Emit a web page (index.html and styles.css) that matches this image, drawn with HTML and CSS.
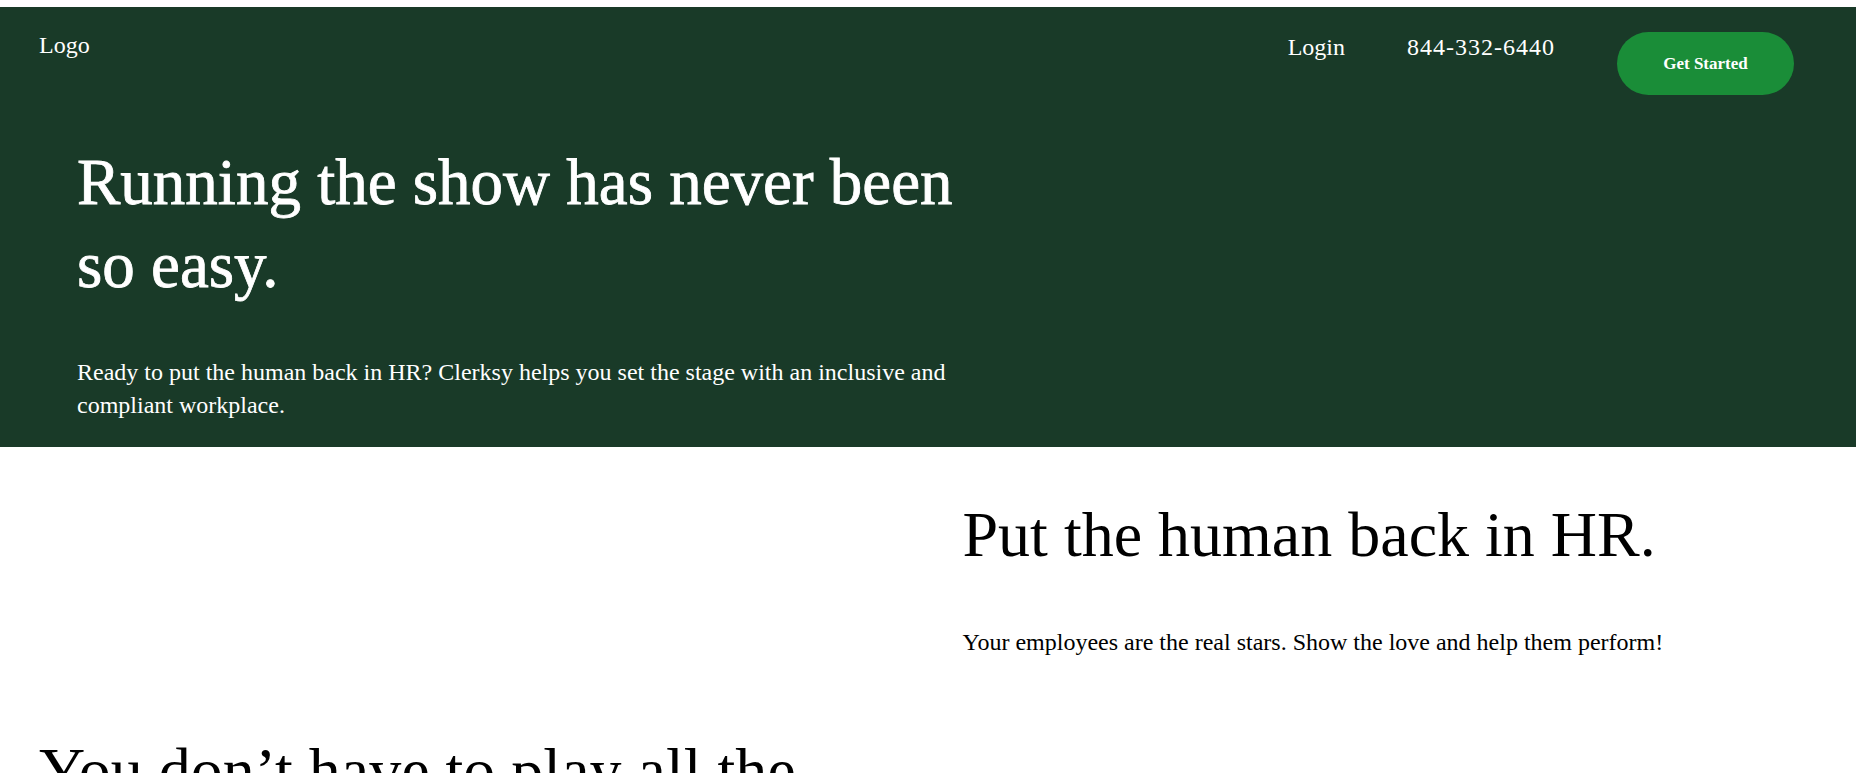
FILE: index.html
```html
<!DOCTYPE html>
<html lang="en">
<head>
<meta charset="utf-8">
<title>Clerksy</title>
<link rel="stylesheet" href="styles.css">
</head>
<body>
<header class="hero">
  <nav class="nav">
    <div class="logo">Logo</div>
    <div class="nav-right">
      <a class="nav-link login" href="#">Login</a>
      <a class="nav-link phone" href="#">844-332-6440</a>
      <a class="btn" href="#">Get Started</a>
    </div>
  </nav>
  <div class="hero-body">
    <h1 class="hero-title">Running the show has never been so easy.</h1>
    <p class="hero-text">Ready to put the human back in HR? Clerksy helps you set the stage with an inclusive and compliant workplace.</p>
  </div>
</header>
<section class="split">
  <div class="split-media"></div>
  <div class="split-copy">
    <h2 class="section-title">Put the human back in HR.</h2>
    <p class="section-text">Your employees are the real stars. Show the love and help them perform!</p>
  </div>
</section>
<section class="split next">
  <div class="next-copy">
    <h2 class="section-title">You don’t have to play all the roles.</h2>
  </div>
  <div class="split-media"></div>
</section>
</body>
</html>
```
FILE: styles.css
```css
* { box-sizing: border-box; }
html, body { margin: 0; padding: 0; }
body {
  font-family: "Liberation Serif", "Times New Roman", serif;
  color: #000;
  background: #fff;
  overflow: hidden;
}
a { color: inherit; text-decoration: none; }

.hero {
  background: #193a28;
  color: #fff;
  margin: 7px 7px 0 0;
  padding: 25px 62px 25px 39px;
}

.nav {
  display: flex;
  justify-content: space-between;
  align-items: flex-start;
}
.logo {
  font-size: 24px;
  line-height: 27px;
}
.nav-right {
  display: flex;
  align-items: flex-start;
}
.nav-link {
  font-size: 24px;
  line-height: 27px;
  margin-top: 2px;
}
.login { margin-right: 62px; }
.phone { letter-spacing: 1px; margin-right: 62px; }
.btn {
  display: flex;
  align-items: center;
  justify-content: center;
  width: 177px;
  height: 63px;
  border-radius: 32px;
  background: #1a8d38;
  font-size: 17px;
  font-weight: 700;
}

.hero-body {
  padding: 46px 0 0 38px;
  max-width: 930px;
}
.hero-title {
  margin: 0;
  font-size: 65px;
  font-weight: 400;
  line-height: 83px;
  -webkit-text-stroke: 0.8px #fff;
}
.hero-text {
  margin: 49px 0 0;
  font-size: 24px;
  line-height: 33px;
}

.split {
  display: grid;
  grid-template-columns: 1fr 1fr;
  padding-top: 49px;
}
.split-copy {
  padding-left: 31px;
}
.section-title {
  margin: 0;
  font-size: 64px;
  font-weight: 400;
  line-height: 77px;
}
.section-text {
  margin: 53px 0 0;
  font-size: 24px;
  line-height: 33px;
}

.next {
  padding-top: 73px;
}
.next-copy {
  padding-left: 39px;
}
```
